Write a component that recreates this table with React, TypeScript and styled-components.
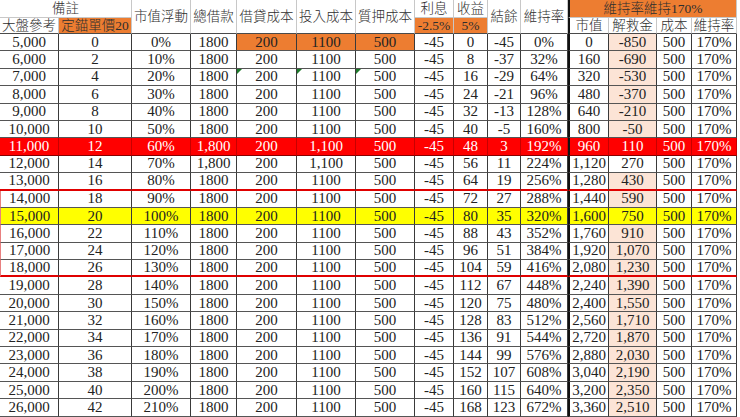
import styled, { createGlobalStyle, css } from "styled-components";

const GlobalStyle = createGlobalStyle`
  html, body {
    margin: 0;
    padding: 0;
    background: #ffffff;
  }
`;

const ORANGE = "#ed7d31";
const PINK = "#fce4d6";
const RED = "#ff0000";
const YELLOW = "#ffff00";

const colWidths = [59, 73, 59, 46, 60, 59, 59, 39, 34, 33, 47, 41, 48, 35, 45];

type Tone = "plain" | "red" | "yellow";
type Fill = "none" | "orange" | "pink";

const Sheet = styled.div`
  display: grid;
  grid-template-columns: ${colWidths.map((w) => w + "px").join(" ")};
  grid-template-rows: 18px 16px repeat(22, 17.4px);
  width: max-content;
  color: #1e1e1e;
`;

const HeadCell = styled.div<{ $col: string; $row: string; $fill?: boolean; $last?: boolean; $thick?: boolean }>`
  grid-column: ${(p) => p.$col};
  grid-row: ${(p) => p.$row};
  display: flex;
  align-items: center;
  justify-content: center;
  box-sizing: border-box;
  border-right: 1px solid #c8c8c8;
  border-bottom: 1px solid #c8c8c8;
  background: ${(p) => (p.$fill ? ORANGE : "#ffffff")};
  font-family: "Liberation Serif", "Noto Sans CJK TC", serif;
  font-size: 13.5px;
  font-weight: 300;
  line-height: 1;
  color: #2e2e2e;
  white-space: nowrap;
  overflow: hidden;
  ${(p) =>
    p.$last &&
    css`
      border-bottom: 1px solid #4a4a4a;
    `}
  ${(p) =>
    p.$thick &&
    css`
      border-left: 2px solid #111;
    `}
`;

const DataCell = styled.div<{
  $tone: Tone;
  $fill: Fill;
  $thick?: boolean;
  $redBottom?: boolean;
  $pinkLeft?: boolean;
  $mark?: boolean;
}>`
  position: relative;
  display: flex;
  align-items: center;
  justify-content: center;
  box-sizing: border-box;
  border-right: 1px solid #3a3a3a;
  border-bottom: 1px solid #555;
  font-family: "Liberation Serif", serif;
  font-size: 15px;
  line-height: 1;
  white-space: nowrap;
  overflow: hidden;
  background: ${(p) =>
    p.$tone === "red"
      ? RED
      : p.$tone === "yellow"
      ? YELLOW
      : p.$fill === "orange"
      ? ORANGE
      : p.$fill === "pink"
      ? PINK
      : "#ffffff"};
  color: ${(p) => (p.$tone === "red" ? "#ffffff" : "#222222")};
  ${(p) =>
    p.$tone === "red" &&
    css`
      border-right-color: #c80000;
      border-bottom-color: #8a0000;
    `}
  ${(p) =>
    p.$thick &&
    css`
      border-left: 2px solid #111;
    `}
  ${(p) =>
    p.$redBottom &&
    css`
      border-bottom: 2px solid #e00000;
    `}
  ${(p) =>
    p.$pinkLeft &&
    css`
      border-left: 1px solid #e88080;
    `}
  ${(p) =>
    p.$mark &&
    css`
      &::before {
        content: "";
        position: absolute;
        top: 0;
        left: 0;
        border-top: 5px solid #1d7a2a;
        border-right: 5px solid transparent;
      }
    `}
`;

type Cell = { v: string; fill?: Fill; mark?: boolean; thick?: boolean };

const buildRow = (i: number): Cell[] => {
  const comma = i === 6 || i === 7;
  const head = i === 0;
  const mark = i === 2;
  return [
    { v: (5000 + 1000 * i).toLocaleString("en-US") },
    { v: String(2 * i) },
    { v: `${10 * i}%` },
    { v: comma ? "1,800" : "1800" },
    { v: "200", fill: head ? "orange" : "none", mark },
    { v: comma ? "1,100" : "1100", fill: head ? "orange" : "none", mark },
    { v: "500", fill: head ? "orange" : "none", mark },
    { v: "-45" },
    { v: String(8 * i) },
    { v: String(8 * i - 45) },
    { v: `${32 * i}%` },
    { v: (160 * i).toLocaleString("en-US"), thick: true },
    { v: (160 * i - 850).toLocaleString("en-US"), fill: i === 7 ? "none" : "pink" },
    { v: "500" },
    { v: "170%" },
  ];
};

const rows = Array.from({ length: 22 }, (_, i) => i);

const App = () => {
  return (
    <>
      <GlobalStyle />
      <Sheet>
        <HeadCell $col="1 / span 2" $row="1">備註</HeadCell>
        <HeadCell $col="3" $row="1 / span 2" $last>市值浮動</HeadCell>
        <HeadCell $col="4" $row="1 / span 2" $last>總借款</HeadCell>
        <HeadCell $col="5" $row="1 / span 2" $last>借貸成本</HeadCell>
        <HeadCell $col="6" $row="1 / span 2" $last>投入成本</HeadCell>
        <HeadCell $col="7" $row="1 / span 2" $last>質押成本</HeadCell>
        <HeadCell $col="8" $row="1">利息</HeadCell>
        <HeadCell $col="9" $row="1">收益</HeadCell>
        <HeadCell $col="10" $row="1 / span 2" $last>結餘</HeadCell>
        <HeadCell $col="11" $row="1 / span 2" $last>維持率</HeadCell>
        <HeadCell $col="12 / span 4" $row="1" $fill $thick>維持率維持170%</HeadCell>

        <HeadCell $col="1" $row="2" $last>大盤參考</HeadCell>
        <HeadCell $col="2" $row="2" $fill $last>定錨單價20</HeadCell>
        <HeadCell $col="8" $row="2" $fill $last>-2.5%</HeadCell>
        <HeadCell $col="9" $row="2" $fill $last>5%</HeadCell>
        <HeadCell $col="12" $row="2" $last $thick>市值</HeadCell>
        <HeadCell $col="13" $row="2" $last>解救金</HeadCell>
        <HeadCell $col="14" $row="2" $last>成本</HeadCell>
        <HeadCell $col="15" $row="2" $last>維持率</HeadCell>

        {rows.map((i) => {
          const tone: Tone = i === 6 ? "red" : i === 10 ? "yellow" : "plain";
          const redBottom = i === 8 || i === 13;
          const inBox = i >= 9 && i <= 13;
          return buildRow(i).map((c, j) => (
            <DataCell
              key={`${i}-${j}`}
              $tone={tone}
              $fill={c.fill ?? "none"}
              $thick={c.thick}
              $redBottom={redBottom}
              $pinkLeft={inBox && j === 0}
              $mark={c.mark}
            >
              {c.v}
            </DataCell>
          ));
        })}
      </Sheet>
    </>
  );
};

export default App;
